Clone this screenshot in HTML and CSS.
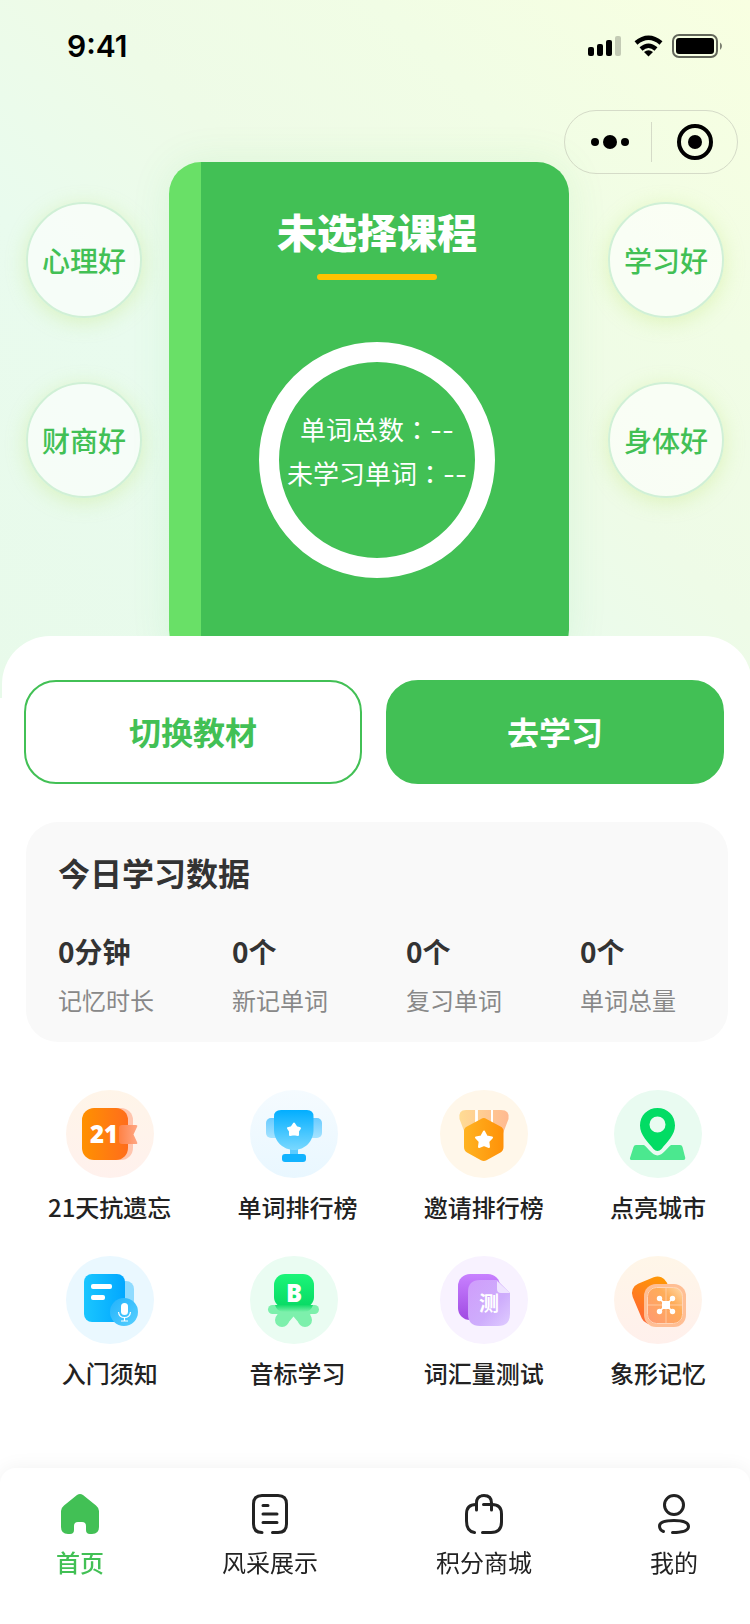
FILE: index.html
```html
<!DOCTYPE html>
<html lang="zh-CN">

<head>
    <meta charset="UTF-8">
    <meta name="viewport" content="width=device-width, initial-scale=1.0">
    <title>首页</title>
    <link rel="stylesheet" href="styles.css">
</head>

<body>
    <header class="hero">
        <div class="status">
            <span class="time">9:41</span>
            <svg class="status-icons" width="136" height="26" viewBox="0 0 136 26">
                <rect x="0" y="14" width="6" height="9" rx="2" />
                <rect x="9" y="11" width="6" height="12" rx="2" />
                <rect x="18" y="7" width="6" height="16" rx="2" />
                <rect x="27" y="3" width="6" height="20" rx="2" opacity=".2" />
                <path d="M48 10Q60.500 -0.500 73 10M53 16Q60.500 9.500 68 16" fill="none" stroke="#000" stroke-width="4.500" />
                <path d="M56 19Q60.500 15.500 65 19L60.500 23.500Z" />
                <rect x="85" y="2" width="44" height="22" rx="6" fill="none" stroke="#000" stroke-width="2" opacity=".6" />
                <rect x="88" y="5" width="38" height="16" rx="3" />
                <path d="M132 9.500Q134 10.500 134 13T132 17Z" opacity=".5" />
            </svg>
        </div>
        <div class="nav">
            <div class="capsule">
                <button type="button" aria-label="更多">
                    <svg width="40" height="40" viewBox="0 0 40 40">
                        <circle cx="5" cy="20" r="4" />
                        <circle cx="20" cy="20" r="7" />
                        <circle cx="35" cy="20" r="4" />
                    </svg>
                </button>
                <button type="button" aria-label="关闭">
                    <svg width="40" height="40" viewBox="0 0 40 40">
                        <circle cx="20" cy="20" r="16" fill="none" stroke="#000" stroke-width="4" />
                        <circle cx="20" cy="20" r="7" />
                    </svg>
                </button>
            </div>
        </div>
        <div class="stage">
            <div class="bubbles">
                <button type="button" class="bubble">心理好</button>
                <button type="button" class="bubble">财商好</button>
            </div>
            <section class="book">
                <h1>未选择课程</h1>
                <div class="ring" lang="zh-TW">
                    <p>单词总数：--</p>
                    <p>未学习单词：--</p>
                </div>
            </section>
            <div class="bubbles">
                <button type="button" class="bubble">学习好</button>
                <button type="button" class="bubble">身体好</button>
            </div>
        </div>
    </header>

    <main class="sheet">
        <div class="actions">
            <button type="button" class="btn">切换教材</button>
            <button type="button" class="btn btn-primary">去学习</button>
        </div>

        <section class="today">
            <h2>今日学习数据</h2>
            <dl class="stats">
                <div>
                    <dt>记忆时长</dt>
                    <dd>0分钟</dd>
                </div>
                <div>
                    <dt>新记单词</dt>
                    <dd>0个</dd>
                </div>
                <div>
                    <dt>复习单词</dt>
                    <dd>0个</dd>
                </div>
                <div>
                    <dt>单词总量</dt>
                    <dd>0个</dd>
                </div>
            </dl>
        </section>

        <nav class="menu">
            <a href="#">
                <svg width="88" height="88" viewBox="0 0 88 88">
                    <defs>
                        <linearGradient id="a1" x1="0" y1="0" x2="1" y2="0">
                            <stop offset="0" stop-color="#ff9100" />
                            <stop offset="1" stop-color="#ff6d1c" />
                        </linearGradient>
                        <linearGradient id="a2" x1="0" y1="0" x2="1" y2="0">
                            <stop offset="0" stop-color="#ff8245" />
                            <stop offset="1" stop-color="#ffa784" />
                        </linearGradient>
                        <linearGradient id="a3" x1="0" y1="0" x2="0" y2="1">
                            <stop offset="0" stop-color="#fff5e9" />
                            <stop offset="1" stop-color="#fff1ed" />
                        </linearGradient>
                    </defs>
                    <circle cx="44" cy="44" r="44" fill="url(#a3)" />
                    <rect x="30" y="18" width="37" height="52" rx="12" fill="#ffc5ae" />
                    <rect x="16" y="18" width="46" height="52" rx="12" fill="url(#a1)" />
                    <path d="M56 35H70Q72 35 71 37L67.500 44.500L71 52Q72 54 70 54H56Q53 54 53 51V38Q53 35 56 35Z" fill="url(#a2)" />
                    <text x="38" y="53" class="num">21</text>
                </svg>
                <span>21天抗遗忘</span>
            </a>
            <a href="#">
                <svg width="96" height="88" viewBox="0 0 96 88">
                    <defs>
                        <linearGradient id="b1" x1="0" y1="0" x2="0" y2="1">
                            <stop offset="0" stop-color="#02aeff" />
                            <stop offset="1" stop-color="#79d8ff" />
                        </linearGradient>
                        <linearGradient id="b2" x1="0" y1="0" x2="0" y2="1">
                            <stop offset="0" stop-color="#6acbff" />
                            <stop offset="1" stop-color="#a6e3ff" />
                        </linearGradient>
                        <linearGradient id="b3" x1="0" y1="0" x2="0" y2="1">
                            <stop offset="0" stop-color="#f5fbff" />
                            <stop offset="1" stop-color="#e9f7ff" />
                        </linearGradient>
                    </defs>
                    <circle cx="44" cy="44" r="44" fill="url(#b3)" />
                    <rect x="16" y="28" width="56" height="20" rx="5" fill="url(#b2)" />
                    <rect x="40" y="58" width="8" height="7" fill="#5bcbff" />
                    <path d="M31 20H57Q63.500 20 63.500 26.500V40C63.500 51 55 60 44 60S24 51 24 40V26.500Q24 20 31 20Z" fill="url(#b1)" />
                    <rect x="32" y="64" width="24" height="8" rx="3" fill="#12b3ff" />
                    <path d="M44 33.500L46.500 37.200L50 38.200L48 41.300L48 45L44 44.200L40 45L40 41.300L38 38.200L41.500 37.200Z" class="star" />
                </svg>
                <span>单词排行榜</span>
            </a>
            <a href="#">
                <svg width="88" height="88" viewBox="0 0 88 88">
                    <defs>
                        <linearGradient id="c1" x1="0" y1="0" x2="1" y2="0">
                            <stop offset="0" stop-color="#ffb321" />
                            <stop offset="1" stop-color="#ff9108" />
                        </linearGradient>
                        <linearGradient id="c2" x1="19" y1="0" x2="69" y2="0" gradientUnits="userSpaceOnUse">
                            <stop offset="0" stop-color="#ffdc94" />
                            <stop offset="1" stop-color="#ffb991" />
                        </linearGradient>
                    </defs>
                    <circle cx="44" cy="44" r="44" fill="#fff7ea" />
                    <path d="M35 20V46H26L19.500 29Q18 20 26 20ZM38 20H51V40H38ZM53 20H61Q70 20 68.500 29L62 46H53Z" fill="url(#c2)" />
                    <path d="M35.500 20H37.500V34H35.500ZM51 20H53V34H51Z" fill="#fff" />
                    <path d="M41 29Q43.800 27.200 46.500 29L60.500 36.500Q63.500 38 63.500 41V57Q63.500 60.500 60.500 62.500L46.500 70.300Q43.800 71.800 41 70.300L27 62.500Q24 60.500 24 57V41Q24 38 27 36.500Z" fill="url(#c1)" />
                    <path d="M44 41.500L46.700 46.500L52 47.500L48.300 51.500L49 57L44 55L39 57L39.700 51.500L36 47.500L41.300 46.500Z" class="star" />
                </svg>
                <span>邀请排行榜</span>
            </a>
            <a href="#">
                <svg width="88" height="88" viewBox="0 0 88 88">
                    <circle cx="44" cy="44" r="44" fill="#e9fbf1" />
                    <path d="M22 55H30C35 59 38 65 43.500 65.500C49 65 52 59 57 55H66Q68 55 68.500 57L71.300 68Q71.500 70 69.500 70H18Q15.500 70 16 68L19.500 57Q20 55 22 55Z" fill="#4be88f" />
                    <path fill-rule="evenodd" d="M43.500 18C53.500 18 61 25.500 61 35.500C61 45 53 52 47.500 59Q43.500 63 39.500 59C34 52 26 45 26 35.500C26 25.500 33.500 18 43.500 18ZM43.500 26.500A8 8 0 1 0 43.500 42.500A8 8 0 1 0 43.500 26.500Z" fill="#02dc64" />
                </svg>
                <span>点亮城市</span>
            </a>
            <a href="#">
                <svg width="88" height="88" viewBox="0 0 88 88">
                    <defs>
                        <linearGradient id="e1" x1="0" y1="0" x2="1" y2="0">
                            <stop offset="0" stop-color="#1ac6ff" />
                            <stop offset="1" stop-color="#02a7ff" />
                        </linearGradient>
                        <linearGradient id="e2" x1="0" y1="0" x2="1" y2="1">
                            <stop offset="0" stop-color="#22b2fb" />
                            <stop offset="1" stop-color="#58d0ff" />
                        </linearGradient>
                    </defs>
                    <circle cx="44" cy="44" r="44" fill="#eaf8ff" />
                    <rect x="36" y="25" width="32" height="38" rx="8" fill="#8fdbff" />
                    <rect x="18" y="18" width="41" height="48" rx="8" fill="url(#e1)" />
                    <rect x="25" y="28" width="21" height="5" rx="2" fill="#fff" />
                    <rect x="25" y="39" width="14" height="5" rx="2" fill="#fff" />
                    <circle cx="58" cy="56" r="14" fill="url(#e2)" />
                    <rect x="55" y="47" width="7" height="12" rx="3.500" fill="#fff" />
                    <path d="M52.500 56Q53 61.500 58.500 61.500T64.500 56M58.500 61.500V65M55 65H62" fill="none" stroke="#fff" stroke-width="1.200" />
                </svg>
                <span>入门须知</span>
            </a>
            <a href="#">
                <svg width="96" height="88" viewBox="0 0 96 88">
                    <defs>
                        <linearGradient id="f1" x1="0" y1="0" x2="0" y2="1">
                            <stop offset="0" stop-color="#1bf578" />
                            <stop offset="1" stop-color="#08d964" />
                        </linearGradient>
                        <linearGradient id="f2" x1="0" y1="0" x2="0" y2="1">
                            <stop offset="0" stop-color="#12dd69" />
                            <stop offset="1" stop-color="#7df0ac" />
                        </linearGradient>
                    </defs>
                    <circle cx="44" cy="44" r="44" fill="#eafcf2" />
                    <g fill="#7df0ac">
                        <rect x="18" y="49" width="51" height="9" rx="4.500" />
                        <circle cx="32" cy="64" r="7" />
                        <circle cx="55" cy="64" r="7" />
                        <path d="M28 55H60L61 68L49 67L43.500 60.500L38 67L26 68Z" />
                    </g>
                    <rect x="24" y="18" width="40" height="34" rx="11" fill="url(#f1)" />
                    <path d="M25 49H63Q61 56 54 56H34Q27 56 25 49Z" fill="url(#f2)" />
                    <text x="44" y="46" class="num">B</text>
                </svg>
                <span>音标学习</span>
            </a>
            <a href="#">
                <svg width="88" height="88" viewBox="0 0 88 88">
                    <defs>
                        <linearGradient id="g1" x1="0" y1="0" x2="0" y2="1">
                            <stop offset="0" stop-color="#c881ff" />
                            <stop offset="1" stop-color="#a04be2" />
                        </linearGradient>
                        <linearGradient id="g2" x1="0" y1="0" x2="1" y2="1">
                            <stop offset="0" stop-color="#cf9dfb" />
                            <stop offset=".6" stop-color="#ceadfc" />
                            <stop offset="1" stop-color="#dfccff" />
                        </linearGradient>
                    </defs>
                    <circle cx="44" cy="44" r="44" fill="#f8f2ff" />
                    <rect x="18" y="18" width="42" height="46" rx="12" fill="url(#g1)" />
                    <path d="M40 24H57L70 37V58Q70 70 58 70H40Q28 70 28 58V36Q28 24 40 24Z" fill="url(#g2)" />
                    <path d="M57 25L70 37H61Q57 37 57 33Z" fill="#efe4ff" />
                    <text x="49" y="55" class="ce">测</text>
                </svg>
                <span>词汇量测试</span>
            </a>
            <a href="#">
                <svg width="88" height="88" viewBox="0 0 88 88">
                    <defs>
                        <linearGradient id="h1" x1="1" y1="0" x2="0" y2="1">
                            <stop offset="0" stop-color="#ff9c00" />
                            <stop offset="1" stop-color="#ff6338" />
                        </linearGradient>
                        <linearGradient id="h2" x1="1" y1="0" x2="0" y2="1">
                            <stop offset="0" stop-color="#ffdcae" />
                            <stop offset=".35" stop-color="#ffad58" />
                            <stop offset="1" stop-color="#ff9873" />
                        </linearGradient>
                        <linearGradient id="h3" x1="0" y1="0" x2="0" y2="1">
                            <stop offset="0" stop-color="#fff6e8" />
                            <stop offset="1" stop-color="#fff0ec" />
                        </linearGradient>
                    </defs>
                    <circle cx="44" cy="44" r="44" fill="url(#h3)" />
                    <rect x="22" y="23" width="37" height="43" rx="10" fill="url(#h1)" transform="rotate(-23 40 45)" />
                    <rect x="30" y="28" width="42" height="43" rx="12" fill="#ffbe94" />
                    <rect x="33" y="31" width="36" height="37" rx="9" fill="url(#h2)" />
                    <path d="M52 32V67M34 49H68" stroke="#ffc9a0" stroke-width="1" />
                    <rect x="33.500" y="31.500" width="35" height="36" rx="9" fill="none" stroke="#ffd5b8" />
                    <path d="M45.500 42.500L58.500 55.500M58.500 42.500L45.500 55.500" stroke="#fff" stroke-width="1.500" />
                    <rect x="48" y="45" width="8" height="8" rx="1" fill="#fff" />
                    <g fill="#fff">
                        <circle cx="45.500" cy="42.500" r="2.700" />
                        <circle cx="58.500" cy="42.500" r="2.700" />
                        <circle cx="45.500" cy="55.500" r="2.700" />
                        <circle cx="58.500" cy="55.500" r="2.700" />
                    </g>
                </svg>
                <span>象形记忆</span>
            </a>
        </nav>
    </main>

    <nav class="tabbar">
        <a href="#" class="active">
            <svg width="40" height="40" viewBox="0 0 40 40">
                <path d="M17 1Q20 -1 23 1L36 11.500Q39 14 39 17V33Q39 40 32 40H30Q26 40 26 36V32Q26 28 22 28H18Q14 28 14 32V36Q14 40 10 40H8Q1 40 1 33V17Q1 14 4 11.500Z" fill="#42c055" />
            </svg>
            <span>首页</span>
        </a>
        <a href="#">
            <svg class="line" width="40" height="40" viewBox="0 0 40 40">
                <path d="M12 38.500Q3.500 38.500 3.500 30V10Q3.500 1.500 12 1.500H28Q36.500 1.500 36.500 10V30Q36.500 38.500 28 38.500H22.500" />
                <path d="M13 11.500H18M13 20H27M13 28.500H27" />
            </svg>
            <span>风采展示</span>
        </a>
        <a href="#">
            <svg class="line" width="40" height="40" viewBox="0 0 40 40">
                <path d="M10.500 38.500Q2.500 37.500 2.500 27V20Q2.500 10.500 12 10.500" />
                <path d="M12.500 16V9Q12.500 1.500 20 1.500T27.500 9V16" />
                <path d="M19.500 10.500H28Q37.500 10.500 37.500 20V28Q37.500 38.500 27 38.500H18.500" />
            </svg>
            <span>积分商城</span>
        </a>
        <a href="#">
            <svg class="line" width="40" height="40" viewBox="0 0 40 40">
                <circle cx="20" cy="11" r="9.500" />
                <path d="M9.500 37.500Q5.500 36 5.500 32C5.500 28 11 26.500 20 26.500S34.500 28 34.500 32.500C34.500 37 28 38.500 18.500 38.500" />
            </svg>
            <span>我的</span>
        </a>
    </nav>
</body>

</html>
```

FILE: styles.css
```css
* {
    margin: 0;
    padding: 0;
    box-sizing: border-box;
}

body {
    background: #fff;
    color: #222;
    font-family: "Noto Sans CJK SC", sans-serif;
    font-size: 24px;
    line-height: 36px;
    overflow-x: hidden;
}

a {
    color: inherit;
    text-decoration: none;
}

button {
    border: 0;
    background: none;
    font-family: inherit;
    cursor: pointer;
}

svg {
    display: block;
}

/* 顶部 */
.hero {
    height: 698px;
    overflow: hidden;
    background: linear-gradient(to bottom left, #f8ffe1, #f1fde5 25%, #eefbe7 45%, #e9fbee 65%, #e8faea);
}

.status {
    display: flex;
    justify-content: space-between;
    align-items: center;
    height: 92px;
    padding: 0 26px 0 67px;
}

.time {
    color: #000;
    font-family: Inter, sans-serif;
    font-size: 30px;
    font-weight: 600;
}

.nav {
    display: flex;
    justify-content: flex-end;
    padding: 18px 12px 0;
}

.capsule {
    display: flex;
    align-items: center;
    width: 174px;
    height: 64px;
    border: 1px solid #d5dbc8;
    border-radius: 32px;
}

.capsule button {
    display: flex;
    justify-content: center;
    align-items: center;
    width: 50%;
    height: 40px;
    padding-left: 4px;
}

.capsule button + button {
    padding-left: 0;
    border-left: 1px solid #d5dbc8;
}

.stage {
    display: flex;
    justify-content: space-between;
    margin-top: -12px;
    padding: 0 26px;
}

.bubbles {
    display: flex;
    flex-direction: column;
    gap: 64px;
    padding-top: 40px;
}

.bubble {
    width: 116px;
    height: 116px;
    border: 2px solid #d0f0d6;
    border-radius: 50%;
    background: rgba(255, 255, 255, .6);
    box-shadow: 0 4px 20px rgba(190, 230, 110, .35);
    color: #42c055;
    font-size: 28px;
    font-weight: 500;
}

.book {
    display: flex;
    flex-direction: column;
    align-items: center;
    width: 400px;
    height: 500px;
    margin-right: 12px;
    padding: 39px 0 0 16px;
    border-radius: 32px;
    background: linear-gradient(to right, #69e067 32px, #42c055 32px);
    box-shadow: 0 0 40px rgba(66, 192, 85, .1);
    color: #fff;
}

.book h1 {
    font-size: 40px;
    font-weight: 900;
    line-height: 60px;
}

.book h1::after {
    content: "";
    display: block;
    width: 120px;
    height: 6px;
    margin: 13px auto 0;
    border-radius: 3px;
    background: #ffc300;
}

.ring {
    width: 236px;
    height: 236px;
    margin-top: 62px;
    padding-top: 47px;
    border: 20px solid #fff;
    border-radius: 50%;
    font-family: Inter, "Noto Sans CJK TC", sans-serif;
    font-size: 26px;
    line-height: 44px;
    text-align: center;
    white-space: nowrap;
}

/* 内容 */
.sheet {
    position: relative;
    margin: -62px -2px 0 2px;
    padding: 44px 24px 220px;
    border-radius: 48px 48px 0 0;
    background: #fff;
}

.actions {
    display: flex;
    gap: 24px;
    margin: 0 4px 0 -2px;
}

.btn {
    flex: 1;
    height: 104px;
    padding-bottom: 2px;
    border: 2px solid #42c055;
    border-radius: 32px;
    color: #42c055;
    font-size: 32px;
    font-weight: 700;
}

.btn-primary {
    background: #42c055;
    color: #fff;
}

.today {
    margin-top: 38px;
    padding: 27px 0 22px 32px;
    border-radius: 32px;
    background: #f9f9f9;
}

.today h2 {
    color: #333;
    font-size: 32px;
    font-weight: 700;
    line-height: 46px;
}

.stats {
    display: grid;
    grid-template-columns: repeat(4, 174px);
    margin-top: 35px;
}

.stats div {
    display: flex;
    flex-direction: column-reverse;
    gap: 8px;
}

.stats dt {
    color: #888;
    line-height: 40px;
}

.stats dd {
    color: #333;
    font-size: 28px;
    font-weight: 700;
    line-height: 42px;
}

.menu {
    display: grid;
    grid-template-columns: repeat(4, auto);
    justify-content: space-between;
    row-gap: 31px;
    margin-top: 48px;
    padding: 0 22px;
}

.menu a {
    display: flex;
    flex-direction: column;
    align-items: center;
    gap: 11px;
    font-weight: 500;
}

.num {
    fill: #fff;
    font-family: "Open Sans", sans-serif;
    font-size: 24px;
    font-weight: 800;
    text-anchor: middle;
}

.ce {
    fill: #fff;
    font-size: 20px;
    font-weight: 700;
    text-anchor: middle;
}

.star {
    fill: #fff;
    stroke: #fff;
    stroke-width: 2;
    stroke-linejoin: round;
}

/* 底部导航 */
.tabbar {
    position: fixed;
    left: 0;
    right: 0;
    bottom: 0;
    display: flex;
    justify-content: space-between;
    height: 156px;
    padding: 26px 52px 0 56px;
    border-radius: 16px 16px 0 0;
    background: #fff;
    box-shadow: 0 0 20px rgba(0, 0, 0, .06);
}

.tabbar a {
    display: flex;
    flex-direction: column;
    align-items: center;
    gap: 10px;
}

.tabbar .active {
    color: #42c055;
    font-weight: 500;
}

.line {
    fill: none;
    stroke: #222;
    stroke-width: 3;
    stroke-linecap: round;
}
```
